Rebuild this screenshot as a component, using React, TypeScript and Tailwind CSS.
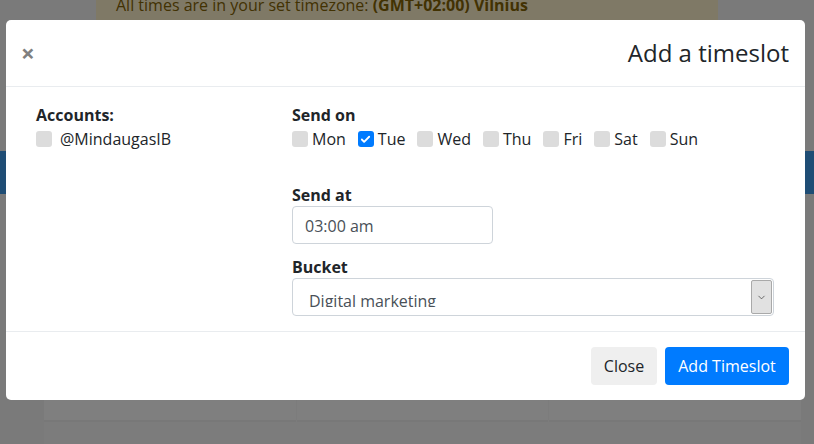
import { Check, ChevronDown } from "lucide-react";

const days = [
  { label: "Mon", on: false },
  { label: "Tue", on: true },
  { label: "Wed", on: false },
  { label: "Thu", on: false },
  { label: "Fri", on: false },
  { label: "Sat", on: false },
  { label: "Sun", on: false },
];

function Box({ on }: { on?: boolean }) {
  return on ? (
    <span className="w-4 h-4 rounded-[3px] bg-[#007bff] flex items-center justify-center shrink-0">
      <Check size={11} strokeWidth={4} className="text-white" />
    </span>
  ) : (
    <span className="w-4 h-4 rounded-[3px] bg-[#dcdcdc] shrink-0" />
  );
}

export default function App() {
  return (
    <div
      className="relative w-[814px] h-[444px] overflow-hidden bg-[#f4f4f4] text-[#212529]"
      style={{ fontFamily: '"Open Sans", "Noto Sans", sans-serif' }}
    >
      {/* page behind the modal */}
      <div className="flex flex-col h-full">
        <div className="mx-[96px] h-[40px] -mt-[7px] bg-[#fff3cd] text-[#856404] pl-5 text-[16px] leading-6">
          All times are in your set timezone: <b>(GMT+02:00) Vilnius</b>
        </div>
        <div className="mt-[118px] h-[43px] bg-[#3e9bea]" />
        <div className="flex-1" />
        <div className="mx-[44px] w-[757px] h-[44px] grid grid-cols-3 gap-px bg-[#f8f8f8]">
          <div className="bg-white border-b-2 border-[#f0f0f0] h-[22px]" />
          <div className="bg-white border-b-2 border-[#f0f0f0] h-[22px]" />
          <div className="bg-white border-b-2 border-[#f0f0f0] h-[22px]" />
        </div>
      </div>

      {/* backdrop */}
      <div className="absolute inset-0 bg-black/50" />

      {/* modal */}
      <div className="absolute left-[6px] top-[20px] w-[799px] h-[380px] bg-white rounded-[5px] flex flex-col">
        <div className="h-[67px] border-b border-[#e9ecef] flex items-center justify-between pl-[15px] pr-4 shrink-0">
          <span className="text-[24px] font-bold text-[#808080] leading-none -mt-[1px]">×</span>
          <span className="text-[24px] leading-9 text-[#212529] -mt-[1px]">Add a timeslot</span>
        </div>

        <div className="flex-1 flex pl-[30px] pt-[16px] text-[16px] leading-6">
          <div className="w-[256px] shrink-0">
            <div className="font-bold">Accounts:</div>
            <div className="flex items-center gap-2">
              <Box />
              <span>@MindaugasIB</span>
            </div>
          </div>
          <div className="flex-1">
            <div className="font-bold">Send on</div>
            <div className="flex items-center gap-3">
              {days.map((d) => (
                <div key={d.label} className="flex items-center gap-1">
                  <Box on={d.on} />
                  <span>{d.label}</span>
                </div>
              ))}
            </div>

            <div className="font-bold mt-[32px]">Send at</div>
            <div className="w-[201px] h-[38px] -mt-px border border-[#ced4da] rounded-[4px] flex items-center pl-3 pt-px text-[#495057]">
              03:00 am
            </div>

            <div className="font-bold mt-[11px]">Bucket</div>
            <div className="w-[482px] h-[38px] -mt-px border border-[#ced4da] rounded-[4px] flex items-start pr-[1px] pt-[1px]">
              <div className="flex-1 h-[27px] overflow-hidden pl-4 pt-[9px] text-[#495057] leading-6">
                Digital marketing
              </div>
              <div className="w-[21px] h-[34px] bg-[#e1e1e1] border border-[#a9a9a9] rounded-[2px] flex items-center justify-center">
                <ChevronDown size={11} strokeWidth={1.5} className="text-[#333]" />
              </div>
            </div>
          </div>
        </div>

        <div className="h-[69px] border-t border-[#e9ecef] flex items-center justify-end gap-2 px-4 shrink-0">
          <button className="h-[38px] w-[66px] rounded-[4px] bg-[#efefef] text-[#212529] text-[16px]">
            Close
          </button>
          <button className="h-[38px] w-[124px] rounded-[4px] bg-[#007bff] text-white text-[16px]">
            Add Timeslot
          </button>
        </div>
      </div>
    </div>
  );
}
